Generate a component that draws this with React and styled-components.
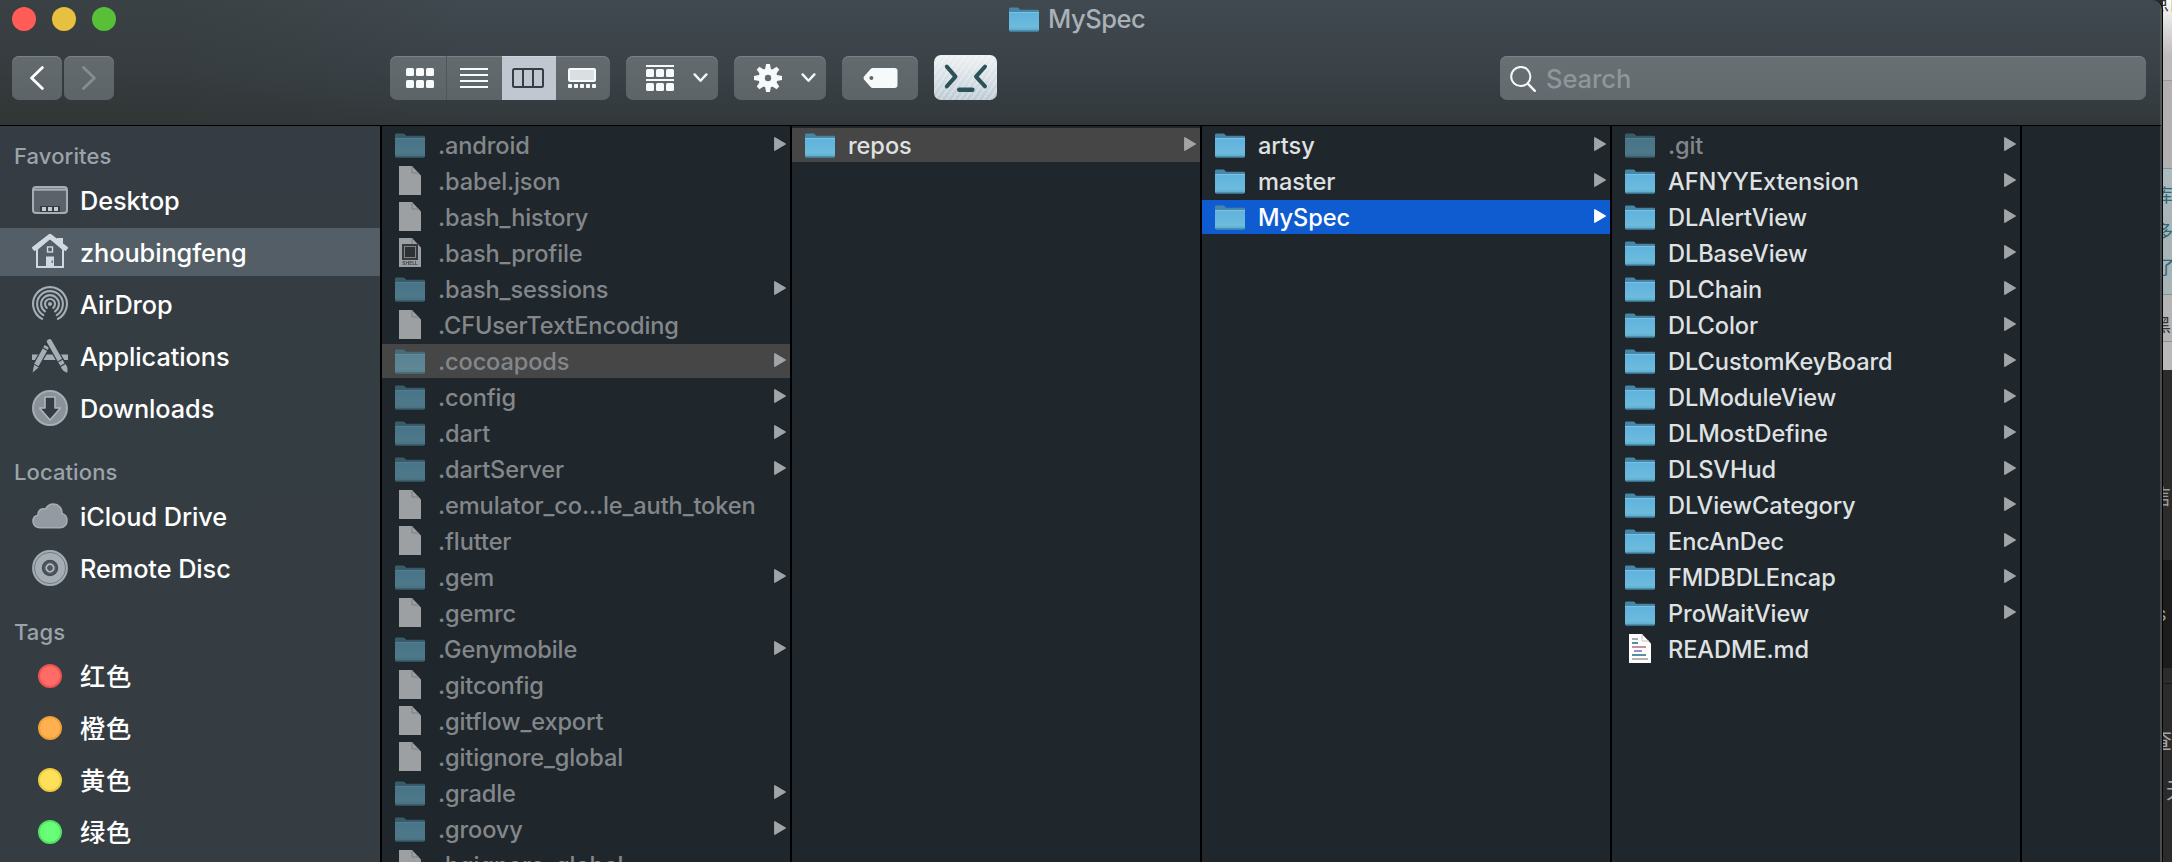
import React from 'react';
import styled, { createGlobalStyle } from 'styled-components';

const GlobalStyle = createGlobalStyle`
  * { box-sizing: border-box; }
  html, body { margin: 0; padding: 0; background: #2b2b2b; overflow: hidden; }
  body { font-family: Inter, "Noto Sans CJK SC", sans-serif; }
  svg { display: block; flex: none; }
`;

const Screen = styled.div`
  display: flex;
  width: 2172px;
  height: 862px;
  overflow: hidden;
`;

const Window = styled.div`
  width: 2163px;
  flex: none;
  display: flex;
  flex-direction: column;
  border-right: 1px solid #000;
  border-top-right-radius: 10px;
  overflow: hidden;
  background: #1f262c;
`;

const Header = styled.header`
  height: 126px;
  flex: none;
  border-bottom: 1px solid #000;
  border-right: 2px solid #51585c;
  background:
    linear-gradient(90deg, rgba(46, 48, 44, 0.34) 0, rgba(46, 48, 44, 0.3) 180px, rgba(46, 48, 44, 0) 460px),
    linear-gradient(180deg, #40494f 0, #3a4248 55%, #32383a 100%);
`;

const TitleBar = styled.div`
  height: 36px;
  display: grid;
  grid-template-columns: 1009px auto 1fr;
  align-items: center;
`;

const Lights = styled.div`
  display: flex;
  gap: 16px;
  padding-left: 12px;
`;

const Light = styled.span`
  width: 24px;
  height: 24px;
  border-radius: 50%;
  background: ${(p) => p.$color};
`;

const Title = styled.div`
  display: flex;
  align-items: center;
  gap: 9px;
  font-size: 25.5px;
  font-weight: 450;
  line-height: 36px;
  letter-spacing: -0.45px;
  padding-top: 1px;
  color: #a9b1b7;
`;

const Toolbar = styled.div`
  display: flex;
  align-items: flex-end;
  height: 64px;
  padding: 0 14px 0 12px;
`;

const Segments = styled.div`
  display: flex;
  height: 44px;
  gap: ${(p) => p.$gap || 0}px;
  margin-right: ${(p) => p.$after || 0}px;
`;

const Button = styled.button`
  display: flex;
  align-items: center;
  justify-content: center;
  gap: ${(p) => p.$gap || 0}px;
  width: ${(p) => p.$width}px;
  height: 44px;
  padding: ${(p) => p.$padding || '0'};
  border: 0;
  border-left: ${(p) => (p.$divider ? '1px solid #50575b' : '0')};
  border-radius: ${(p) => p.$radius || '7px'};
  margin-right: ${(p) => p.$after || 0}px;
  background: ${(p) => (p.$active ? '#c1c7d0' : 'linear-gradient(180deg, #646b6e, #5d6468)')};
  box-shadow: inset 0 1px 0 ${(p) => (p.$active ? '#d0d5dc' : '#7b8184')};
`;

const TerminalButton = styled.button`
  width: 63px;
  height: 45px;
  padding: 0;
  border: 0;
  border-radius: 7px;
  margin-right: 503px;
  overflow: hidden;
  background:
    repeating-linear-gradient(125deg, rgba(255, 255, 255, 0.25) 0 2px, rgba(255, 255, 255, 0) 2px 5px),
    linear-gradient(180deg, #eef1f3, #d3dde3 60%, #bccad2);
`;

const Search = styled.div`
  display: flex;
  align-items: center;
  gap: 10px;
  width: 646px;
  height: 44px;
  padding: 2px 0 0 10px;
  border-radius: 7px;
  background: linear-gradient(180deg, #687073, #626a6f);
  box-shadow: inset 0 1px 0 #7c8386;
  font-size: 25.5px;
  font-weight: 450;
  letter-spacing: -0.05px;
  line-height: 42px;
  color: #8f979a;
`;

const Body = styled.div`
  display: flex;
  flex: 1;
  min-height: 0;
  border-right: 2px solid #474d50;
`;

const Sidebar = styled.nav`
  width: 382px;
  flex: none;
  border-right: 2px solid #000;
  padding-top: 12px;
  background: linear-gradient(180deg, #353c43 0, #343d42 35%, #363d42 100%);
  overflow: hidden;
`;

const Section = styled.section`
  display: flex;
  flex-direction: column;
  gap: 4px;
  padding-bottom: 22px;
`;

const SectionLabel = styled.h2`
  margin: 0 0 -2px;
  height: 36px;
  padding-left: 14px;
  font-size: 22px;
  font-weight: 500;
  line-height: 36px;
  letter-spacing: 0.1px;
  color: #9ba3ab;
`;

const SideItem = styled.div`
  display: flex;
  align-items: center;
  height: 48px;
  flex: none;
  padding-left: 30px;
  gap: 10px;
  background: ${(p) => (p.$selected ? '#535e66' : 'transparent')};
`;

const IconSlot = styled.span`
  display: flex;
  align-items: center;
  justify-content: center;
  width: 40px;
  flex: none;
`;

const SideText = styled.span`
  font-size: 25.3px;
  font-weight: 500;
  line-height: 48px;
  letter-spacing: ${(p) => p.$track ?? -0.07}px;
  padding-top: 1px;
  color: #fff;
  white-space: nowrap;
`;

const TagDot = styled.span`
  width: 24px;
  height: 24px;
  border-radius: 50%;
  border: 2px solid ${(p) => p.$edge};
  background: ${(p) => p.$fill};
`;

const Column = styled.ul`
  list-style: none;
  margin: 0;
  padding: 2px 0 0;
  width: ${(p) => (p.$last ? 'auto' : '410px')};
  flex: ${(p) => (p.$last ? '1' : 'none')};
  border-right: ${(p) => (p.$last ? '0' : '2px solid #000')};
  background: #1f262c;
  overflow: hidden;
`;

const rowColors = { active: '#0f5cd0', path: '#464646' };

const Row = styled.li`
  display: flex;
  align-items: center;
  height: 34px;
  margin-bottom: 2px;
  padding: 0 4px 0 10px;
  background: ${(p) => rowColors[p.$state] || 'transparent'};
  color: ${(p) => (p.$state === 'active' ? '#fff' : p.$dim ? '#83878a' : '#dfe1e2')};
  letter-spacing: ${(p) => (p.$dim ? -0.13 : -0.08)}px;
`;

const FileIcon = styled.span`
  display: flex;
  justify-content: center;
  width: 36px;
  flex: none;
  opacity: ${(p) => (p.$dim ? 0.56 : 1)};
  filter: ${(p) => (p.$dim ? 'saturate(0.85) hue-rotate(-4deg)' : 'none')};
`;

const Name = styled.span`
  flex: 1;
  padding: 1px 0 0 10px;
  font-size: 23.6px;
  font-weight: 450;
  line-height: 34px;
  white-space: nowrap;
`;

const Backdrop = styled.div`
  flex: 1;
  min-width: 0;
  overflow: hidden;
`;

const Band = styled.div`
  height: ${(p) => p.$height}px;
  background: ${(p) => p.$bg};
  border-bottom: ${(p) => (p.$line ? `1px solid ${p.$line}` : '0')};
  color: ${(p) => p.$color || '#333'};
  font-size: ${(p) => p.$size || 18}px;
  line-height: ${(p) => p.$leading || p.$height}px;
  white-space: nowrap;
  overflow: hidden;
  text-indent: ${(p) => p.$indent ?? -9}px;
`;

const Folder = () => (
  <svg width="30" height="25" viewBox="0 0 30 25">
    <defs>
      <linearGradient id="folderFront" x1="0" y1="0" x2="0" y2="1">
        <stop offset="0" stopColor="#5fb2de" />
        <stop offset="0.75" stopColor="#6dbbdd" />
        <stop offset="1" stopColor="#5caacb" />
      </linearGradient>
    </defs>
    <path d="M0 2Q0 0.6 1.4 0.6H8.2Q9.2 0.6 10 1.6L11 2.8H28.8Q30 2.8 30 4V10H0Z" fill="#4687a8" />
    <path d="M0 5.4H30V23Q30 24.4 28.6 24.4H1.4Q0 24.4 0 23Z" fill="url(#folderFront)" />
    <path d="M0 5.6H30" stroke="#84cbe9" strokeWidth="0.9" />
    <path d="M0.6 23.8H29.4" stroke="#3f84a3" strokeWidth="1" />
  </svg>
);

const Doc = ({ kind }) => (
  <svg width="22" height="30" viewBox="0 0 22 30">
    <path d="M0 0H13L22 9.5V29H0Z" fill="#fff" />
    <path d="M13 0V7H20" fill="none" stroke="#c4c4c4" strokeWidth="1" />
    {kind === 'shell' && (
      <>
        <rect x="3" y="6" width="16" height="16" fill="#4a4a4a" />
        <rect x="5.5" y="8.5" width="11" height="11" fill="#3a3a3a" stroke="#c8c8c8" strokeWidth="1" />
        <text x="11" y="27.4" fontSize="5" fontWeight="600" fontFamily="Inter, sans-serif" letterSpacing="0" textAnchor="middle" fill="#444">SHELL</text>
      </>
    )}
    {kind === 'markdown' && (
      <g>
        <rect x="3" y="4" width="6" height="2" fill="#aaa" />
        <rect x="3" y="8" width="6" height="2" fill="#53929c" />
        <rect x="3" y="12" width="14" height="2" fill="#c9919c" />
        <rect x="5" y="16" width="8" height="2" fill="#9c8bd8" />
        <rect x="3" y="20" width="14" height="2" fill="#53929c" />
        <rect x="3" y="24" width="16" height="2" fill="#b3b3b3" />
      </g>
    )}
  </svg>
);

const Arrow = ({ color }) => (
  <svg width="12" height="14" viewBox="0 0 12 14">
    <path d="M0.8 0.8V13.2L11.3 7Z" fill={color} stroke={color} strokeWidth="1.4" strokeLinejoin="round" />
  </svg>
);

const ArrowSlot = styled.span`
  padding-bottom: 2px;
`;

const Chevron = () => (
  <svg width="15" height="10" viewBox="0 0 15 10">
    <path d="M1.6 1.4L7.5 7.8L13.4 1.4" fill="none" stroke="#f4f6f7" strokeWidth="2.4" strokeLinecap="round" strokeLinejoin="round" />
  </svg>
);

const cells = [0, 10, 20];

const GridIcon = () => (
  <svg width="28" height="20" viewBox="0 0 28 20" fill="#f7fafb">
    {cells.map((x) => <React.Fragment key={x}><rect x={x} y="0" width="8" height="8" rx="1.5" /><rect x={x} y="12" width="8" height="8" rx="1.5" /></React.Fragment>)}
  </svg>
);
const ListIcon = () => (
  <svg width="28" height="20" viewBox="0 0 28 20" fill="#f7fafb">
    {[0, 6, 12, 18].map((y) => <rect key={y} y={y} width="28" height="2" />)}
  </svg>
);
const ColumnsIcon = () => (
  <svg width="32" height="20" viewBox="0 0 32 20" fill="none" stroke="#363d43" strokeWidth="2">
    <rect x="1" y="1" width="30" height="18" rx="1.5" /><path d="M11 1V19M21 1V19" />
  </svg>
);
const GalleryIcon = () => (
  <svg width="28" height="20" viewBox="0 0 28 20" fill="#f7fafb">
    <rect x="1" y="1" width="26" height="12" rx="1" fill="#dadfe1" stroke="#f7fafb" strokeWidth="2" />
    {[0, 6, 12, 18, 24].map((x) => <rect key={x} x={x} y="16" width="4" height="4" rx="0.8" />)}
  </svg>
);
const ArrangeIcon = () => (
  <svg width="28" height="26" viewBox="0 0 28 26" fill="#f7fafb">
    <rect width="28" height="2" /><rect y="14" width="28" height="2" />
    {cells.map((x) => <React.Fragment key={x}><rect x={x} y="4" width="8" height="8" rx="1.5" /><rect x={x} y="18" width="8" height="8" rx="1.5" /></React.Fragment>)}
  </svg>
);
const GearIcon = () => (
  <svg width="28" height="28" viewBox="-14 -14 28 28">
    {[0, 45, 90, 135].map((a) => <path key={a} transform={`rotate(${a})`} d="M-2.9 -9L-1.9 -14H1.9L2.9 -9V9L1.9 14H-1.9L-2.9 9Z" fill="#f7fafb" />)}
    <circle r="9.6" fill="#f7fafb" />
    <circle r="3.2" fill="#636a6e" />
  </svg>
);
const TagIcon = () => (
  <svg width="35" height="20" viewBox="0 0 35 20">
    <path d="M10 0H31.5Q34.5 0 34.5 3V17Q34.5 20 31.5 20H10Q8.5 20 7.4 18.8L1 11.6Q0 10 1 8.4L7.4 1.2Q8.5 0 10 0Z" fill="#f7fafb" />
    <circle cx="8.4" cy="10" r="2" fill="#60676b" />
  </svg>
);
const TerminalIcon = () => (
  <svg width="63" height="45" viewBox="0 0 63 45" fill="none" stroke="#2d5258" strokeLinecap="round" strokeLinejoin="round">
    <path d="M12.8 11.6L21.5 21.6L12.8 31.4M51 11.6L42 21.6L51 31.4" strokeWidth="4" />
    <path d="M25.2 34.8H38.4" strokeWidth="4.4" />
  </svg>
);
const SearchIcon = () => (
  <svg width="26" height="26" viewBox="0 0 26 26" fill="none" stroke="#f4f6f7" strokeWidth="2" strokeLinecap="round">
    <circle cx="10.8" cy="10.5" r="9.6" /><path d="M17.8 17.6L24.8 24.8" strokeWidth="2.4" />
  </svg>
);
const BackIcon = ({ flip, color }) => (
  <svg width="14" height="24" viewBox="0 0 14 24">
    <path d={flip ? 'M1.4 1.6L12.4 12L1.4 22.4' : 'M12.4 1.6L1.6 12L12.4 22.4'} fill="none" stroke={color} strokeWidth="2.8" strokeLinecap="round" strokeLinejoin="round" />
  </svg>
);

const DesktopIcon = () => (
  <svg width="36" height="28" viewBox="0 0 36 28">
    <rect x="1" y="1" width="34" height="26" rx="3" fill="#5b626a" stroke="#a5adb5" strokeWidth="2" />
    <path d="M1.5 3.6H34.5" stroke="#a5adb5" strokeWidth="2.4" />
    <rect x="8" y="20" width="20" height="6" fill="#353c43" />
    <path d="M10 21h4v4h-4zM16 21h4v4h-4zM22 21h4v4h-4z" fill="#c3cad0" />
  </svg>
);
const HomeIcon = () => (
  <svg width="36" height="36" viewBox="0 0 36 36">
    <path d="M25 4H31V14H25Z" fill="#d0d9e0" />
    <path d="M5 15L18 4L31 15V33H5Z" fill="#535e66" stroke="#d0d9e0" strokeWidth="2" />
    <path d="M1 15.5L18 2.2L35 15.5" fill="none" stroke="#d0d9e0" strokeWidth="4.6" />
    <rect x="15.5" y="13" width="5" height="5" fill="none" stroke="#d0d9e0" strokeWidth="1.4" />
    <path d="M14 22.5H22V34H14Z" fill="#d0d9e0" />
    <path d="M20.2 26.5V29" stroke="#535e66" strokeWidth="1.2" />
  </svg>
);
const arc = (r, deg) => {
  const a = (deg * Math.PI) / 180;
  const x = r * Math.sin(a);
  const y = r * Math.cos(a);
  return `M${-x} ${y}A${r} ${r} 0 1 1 ${x} ${y}`;
};
const AirDropIcon = () => (
  <svg width="36" height="36" viewBox="-18 -18 36 36" fill="none" stroke="#a5adb5" strokeWidth="2.1" strokeLinecap="round">
    <path d={arc(16.9, 28)} /><path d={arc(12.9, 31)} /><path d={arc(8.9, 35)} /><path d={arc(5, 40)} />
    <circle r="2.1" fill="#a5adb5" stroke="none" />
  </svg>
);
const ApplicationsIcon = () => (
  <svg width="36" height="36" viewBox="0 0 36 36">
    <path d="M0 16.5H36V22H0Z" fill="#a5adb5" />
    <path d="M15.5 7L2.5 30.5" stroke="#353c43" strokeWidth="7.5" />
    <path d="M14.8 8.2L4.4 27" stroke="#a5adb5" strokeWidth="5" />
    <path d="M2.2 26.8L6.6 29.4L0.6 34.6Z" fill="#a5adb5" />
    <path d="M17.2 3L31.5 28.5" stroke="#353c43" strokeWidth="7.5" />
    <path d="M17.4 3.6L30.4 26.4" stroke="#a5adb5" strokeWidth="5" strokeLinecap="round" />
    <path d="M28.6 28.4L33.4 25.8Q36.4 29.6 35.2 34.8Q30.4 33 28.6 28.4Z" fill="#a5adb5" />
    <path d="M10.8 9.8L15.8 12.8M26.2 23.8L31.4 20.8M27.4 29L34.4 25" stroke="#353c43" strokeWidth="1.3" />
  </svg>
);
const DownloadsIcon = () => (
  <svg width="36" height="36" viewBox="0 0 36 36">
    <circle cx="18" cy="18" r="17" fill="#8b9299" stroke="#a5adb5" strokeWidth="2" />
    <path d="M13 7H23V18H28.5L18 30L7.5 18H13Z" fill="#353c43" stroke="#aeb5bc" strokeWidth="1.6" strokeLinejoin="round" />
  </svg>
);
const CloudIcon = () => (
  <svg width="36" height="26" viewBox="0 0 36 26">
    <path d="M8 24.8C4 24.8 1 22 1 18.2C1 14.8 3.2 12.6 6 12C5.4 7.8 9.6 4.8 13.4 6.2C15 2.8 18 1 21.6 1C26.6 1 30.2 5 30 10.4C33 11.4 35 14.2 35 17.4C35 21.8 32 24.8 28 24.8Z" fill="#939aa2" stroke="#a5adb5" strokeWidth="1.6" />
  </svg>
);
const DiscIcon = () => (
  <svg width="36" height="36" viewBox="-18 -18 36 36">
    <circle r="17.2" fill="#a5adb5" stroke="#a5adb5" strokeWidth="1.4" />
    <circle r="15.6" fill="none" stroke="#737b83" strokeWidth="1" />
    <circle r="8.2" fill="#454c53" />
    <circle r="3.8" fill="#50575e" stroke="#b0b7be" strokeWidth="1.8" />
    <circle r="5.9" fill="none" stroke="#5d656c" strokeWidth="0.8" />
  </svg>
);

const favorites = [
  { name: 'Desktop', Icon: DesktopIcon },
  { name: 'zhoubingfeng', Icon: HomeIcon, selected: true },
  { name: 'AirDrop', Icon: AirDropIcon },
  { name: 'Applications', Icon: ApplicationsIcon },
  { name: 'Downloads', Icon: DownloadsIcon },
];
const locations = [
  { name: 'iCloud Drive', Icon: CloudIcon },
  { name: 'Remote Disc', Icon: DiscIcon },
];
const tags = [
  { name: '红色', fill: '#ff6b67', edge: '#ec5450' },
  { name: '橙色', fill: '#ffb14f', edge: '#f0a036' },
  { name: '黄色', fill: '#ffe05a', edge: '#edcc3f' },
  { name: '绿色', fill: '#69fd78', edge: '#4fe562' },
];

const d = (name, extra) => ({ name, kind: 'folder', ...extra });
const f = (name, extra) => ({ name, kind: 'doc', ...extra });

const home = [
  d('.android'), f('.babel.json'), f('.bash_history'), f('.bash_profile', { kind: 'shell' }),
  d('.bash_sessions'), f('.CFUserTextEncoding'), d('.cocoapods', { state: 'path' }), d('.config'),
  d('.dart'), d('.dartServer'), f('.emulator_co...le_auth_token'), f('.flutter'), d('.gem'),
  f('.gemrc'), d('.Genymobile'), f('.gitconfig'), f('.gitflow_export'), f('.gitignore_global'),
  d('.gradle'), d('.groovy'), f('.hgignore_global'),
].map((e) => ({ ...e, dim: true }));

const specs = [
  d('.git', { dim: true }), d('AFNYYExtension'), d('DLAlertView'), d('DLBaseView'), d('DLChain'),
  d('DLColor'), d('DLCustomKeyBoard'), d('DLModuleView'), d('DLMostDefine'), d('DLSVHud'),
  d('DLViewCategory'), d('EncAnDec'), d('FMDBDLEncap'), d('ProWaitView'),
  f('README.md', { kind: 'markdown' }),
];

const columns = [
  home,
  [d('repos', { state: 'path' })],
  [d('artsy'), d('master'), d('MySpec', { state: 'active' })],
  specs,
];

const Entry = ({ name, kind, state, dim }) => (
  <Row $state={state} $dim={dim}>
    <FileIcon $dim={dim}>{kind === 'folder' ? <Folder /> : <Doc kind={kind} />}</FileIcon>
    <Name>{name}</Name>
    {kind === 'folder' && <ArrowSlot><Arrow color={state === 'active' ? '#fff' : '#a2a5a8'} /></ArrowSlot>}
  </Row>
);

const SideGroup = ({ title, items }) => (
  <Section>
    <SectionLabel>{title}</SectionLabel>
    {items.map(({ name, Icon, fill, edge, selected }) => (
      <SideItem key={name} $selected={selected}>
        <IconSlot>{Icon ? <Icon /> : <TagDot $fill={fill} $edge={edge} />}</IconSlot>
        <SideText $track={fill ? 0.8 : undefined}>{name}</SideText>
      </SideItem>
    ))}
  </Section>
);

export default function App() {
  return (
    <Screen>
      <GlobalStyle />
      <Window>
        <Header>
          <TitleBar>
            <Lights>
              <Light $color="#ff5c57" />
              <Light $color="#e6c03e" />
              <Light $color="#57c038" />
            </Lights>
            <Title><Folder />MySpec</Title>
          </TitleBar>
          <Toolbar>
            <Segments $gap={2} $after={276}>
              <Button $width={50}><BackIcon color="#fff" /></Button>
              <Button $width={50}><BackIcon flip color="#878d90" /></Button>
            </Segments>
            <Segments $after={16}>
              <Button $width={56} $radius="7px 0 0 7px" $padding="0 0 0 4px"><GridIcon /></Button>
              <Button $width={56} $radius="0" $divider $padding="0 1px 0 0"><ListIcon /></Button>
              <Button $width={54} $radius="0" $active $padding="0 2px 0 0"><ColumnsIcon /></Button>
              <Button $width={54} $radius="0 7px 7px 0" $padding="0 2px 0 0"><GalleryIcon /></Button>
            </Segments>
            <Button $width={92} $gap={19} $after={16} $padding="0 0 0 10px"><ArrangeIcon /><Chevron /></Button>
            <Button $width={92} $gap={19} $after={16} $padding="0 0 0 10px"><GearIcon /><Chevron /></Button>
            <Button $width={76} $after={16}><TagIcon /></Button>
            <TerminalButton><TerminalIcon /></TerminalButton>
            <Search><SearchIcon />Search</Search>
          </Toolbar>
        </Header>
        <Body>
          <Sidebar>
            <SideGroup title="Favorites" items={favorites} />
            <SideGroup title="Locations" items={locations} />
            <SideGroup title="Tags" items={tags} />
          </Sidebar>
          {columns.map((entries, i) => (
            <Column key={i}>{entries.map((e) => <Entry key={e.name} {...e} />)}</Column>
          ))}
          <Column $last />
        </Body>
      </Window>
      <Backdrop>
        <Band $height={81} $bg="linear-gradient(180deg, #fbfbfb, #bdbbbc 70%)" $line="#999" $leading={8} $indent={-12}>点自</Band>
        <Band $height={88} $bg="#b3b0b1" $line="#6f9aa3" />
        <Band $height={54} $bg="linear-gradient(180deg, #aebbbe, #a9b4b7)" $color="#2f6878" $indent={-8}>库</Band>
        <Band $height={20} $bg="#a9b4b7" $color="#2f6878" $leading={18} $indent={-8}>多</Band>
        <Band $height={52} $bg="#a9b4b7" $line="#6f9aa3" $color="#2f6878" $leading={50} $indent={-6}>了</Band>
        <Band $height={47} $bg="#b5b3b4" $line="#8f8f8f" $leading={62} $indent={-10}>黑</Band>
        <Band $height={28} $bg="#b9b9b9" />
        <Band $height={190} $bg="#2b2b2b" $color="#9b9b9b" $leading={252} $size={22} $indent={-14}>信</Band>
        <Band $height={108} $bg="#1c1c1c" $color="#9b9b9b" $size={20} $indent={-7}>s</Band>
        <Band $height={16} $bg="#2b2b2b" $line="#1a1a1a" />
        <Band $height={76} $bg="#2b2b2b" $color="#a5a5a5" $leading={112} $size={22} $indent={-13}>查</Band>
        <Band $height={102} $bg="#2b2b2b" $color="#a5a5a5" $leading={60} $size={22} $indent={3}>无</Band>
      </Backdrop>
    </Screen>
  );
}
